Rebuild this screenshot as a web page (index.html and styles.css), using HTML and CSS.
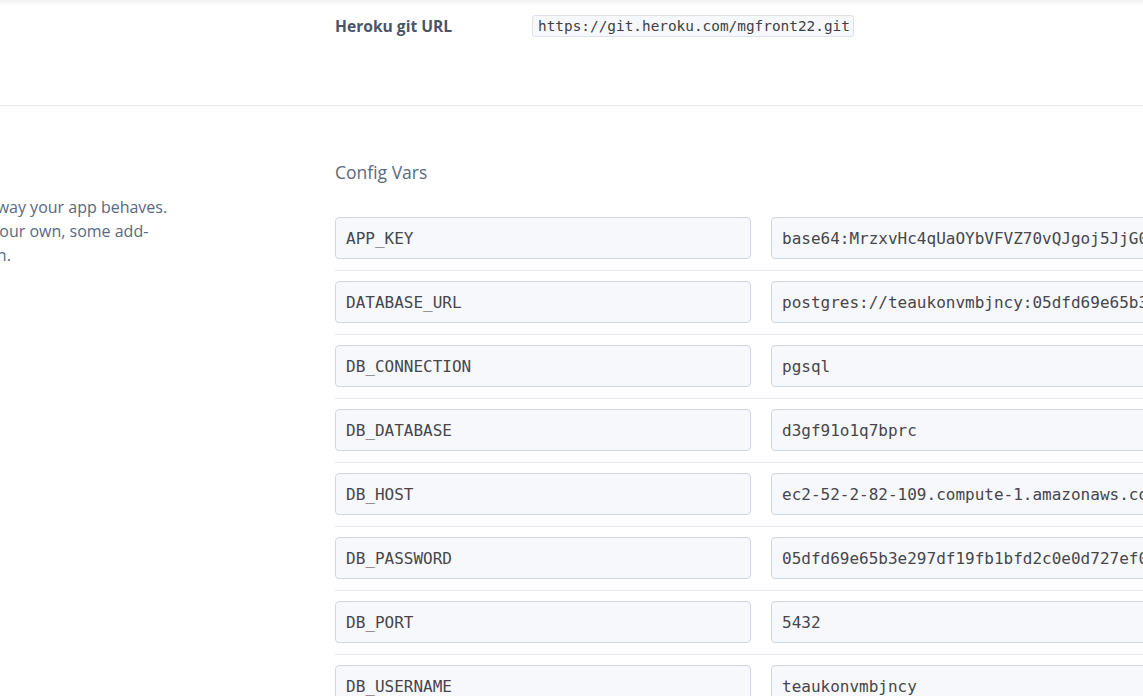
FILE: index.html
```html
<!DOCTYPE html>
<html lang="en">
<head>
<meta charset="utf-8">
<title>Settings</title>
<link rel="stylesheet" href="styles.css">
</head>
<body>
<div class="top-shadow"></div>
<section class="section info">
  <div class="side"></div>
  <div class="main">
    <div class="git-row">
      <div class="git-label">Heroku git URL</div>
      <code class="git-url">https://git.heroku.com/mgfront22.git</code>
    </div>
  </div>
</section>
<section class="section vars">
  <div class="side">
    <p class="desc">Config vars change the way your app behaves.<br>In addition to creating your own, some add-<br>ons come with their own.</p>
  </div>
  <div class="main">
    <h2 class="vars-title">Config Vars</h2>
    <div class="var-row"><div class="field key">APP_KEY</div><div class="field val">base64:MrzxvHc4qUaOYbVFVZ70vQJgoj5JjG0xS2</div></div>
    <div class="var-row"><div class="field key">DATABASE_URL</div><div class="field val">postgres://teaukonvmbjncy:05dfd69e65b3e297df</div></div>
    <div class="var-row"><div class="field key">DB_CONNECTION</div><div class="field val">pgsql</div></div>
    <div class="var-row"><div class="field key">DB_DATABASE</div><div class="field val">d3gf91o1q7bprc</div></div>
    <div class="var-row"><div class="field key">DB_HOST</div><div class="field val">ec2-52-2-82-109.compute-1.amazonaws.com</div></div>
    <div class="var-row"><div class="field key">DB_PASSWORD</div><div class="field val">05dfd69e65b3e297df19fb1bfd2c0e0d727ef0a1</div></div>
    <div class="var-row"><div class="field key">DB_PORT</div><div class="field val">5432</div></div>
    <div class="var-row"><div class="field key">DB_USERNAME</div><div class="field val">teaukonvmbjncy</div></div>
  </div>
</section>
</body>
</html>
```

FILE: styles.css
```css
html, body {
  margin: 0;
  padding: 0;
  background: #ffffff;
  overflow: hidden;
}
body {
  font-family: "Open Sans", "Liberation Sans", sans-serif;
  color: #596981;
  width: 1143px;
  height: 696px;
}
.top-shadow {
  height: 6px;
  margin-bottom: -6px;
  background: linear-gradient(to bottom, #f1f1f3, rgba(255,255,255,0));
  position: relative;
}
.section {
  display: grid;
  grid-template-columns: 335px 1fr;
}
.info {
  height: 105px;
  border-bottom: 1px solid #e8e8ee;
}
.main {
  min-width: 0;
}
.git-row {
  display: flex;
  align-items: center;
  margin-top: 15px;
}
.git-label {
  width: 197px;
  font-weight: 700;
  font-size: 15.6px;
  color: #4a5568;
  line-height: 22px;
}
.git-url {
  font-family: "DejaVu Sans Mono", monospace;
  font-size: 14.4px;
  line-height: 20px;
  color: #3f3f44;
  background: #f7f8fb;
  border: 1px solid #dde2ea;
  border-radius: 3px;
  padding: 0 3px 0 5px;
}
.side {
  overflow: hidden;
  position: relative;
}
.desc {
  margin: 89px 0 0 -177px;
  white-space: nowrap;
  font-size: 16px;
  line-height: 24px;
  color: #596981;
}
.vars-title {
  margin: 54px 0 33px;
  font-size: 17.5px;
  font-weight: 400;
  line-height: 24px;
  color: #596981;
}
.var-row {
  display: flex;
  gap: 20px;
  padding-bottom: 11px;
  margin-bottom: 10px;
  border-bottom: 1px solid #e5eaf2;
  width: 900px;
}
.field {
  flex: 0 0 416px;
  box-sizing: border-box;
  height: 42px;
  border: 1px solid #cfd7e6;
  border-radius: 4px;
  background: #f7f8fb;
  padding: 1px 10px 0;
  font-family: "DejaVu Sans Mono", monospace;
  font-size: 16px;
  line-height: 40px;
  color: #46464c;
  white-space: nowrap;
  overflow: hidden;
}
.field.val {
  flex-basis: 420px;
}
```
